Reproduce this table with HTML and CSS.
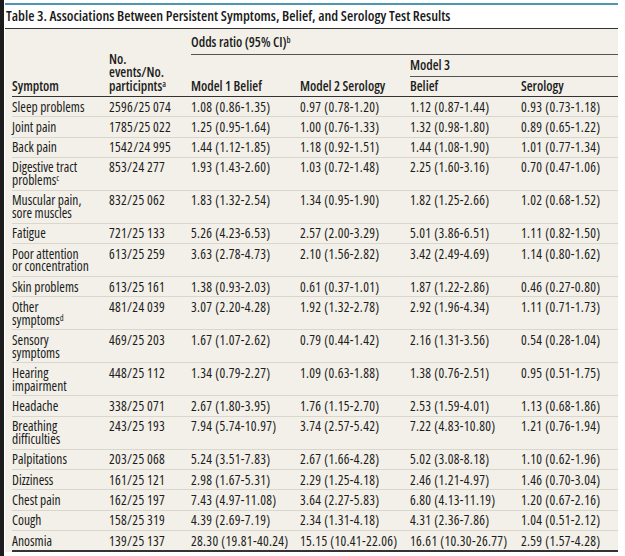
FILE: index.html
```html
<!DOCTYPE html>
<html lang="en">
<head>
<meta charset="utf-8">
<title>Table 3</title>
<link rel="stylesheet" href="styles.css">
</head>
<body>
<div class="frame">
  <div class="panel">
    <div class="title">Table 3. Associations Between Persistent Symptoms, Belief, and Serology Test Results</div>
    <div class="table-wrap">
      <table class="data">
        <colgroup>
          <col class="c1"><col class="c2"><col class="c3"><col class="c4"><col class="c5"><col class="c6">
        </colgroup>
        <thead>
          <tr class="hA">
            <th rowspan="3" class="bottom">Symptom</th>
            <th rowspan="3" class="bottom">No.<br>events/No.<br>participnts<sup>a</sup></th>
            <th colspan="4" class="span-rule">Odds ratio (95% CI)<sup>b</sup></th>
          </tr>
          <tr class="hB">
            <th></th><th></th>
            <th colspan="2" class="span-rule">Model 3</th>
          </tr>
          <tr class="hC">
            <th>Model 1 Belief</th><th>Model 2 Serology</th><th>Belief</th><th>Serology</th>
          </tr>
        </thead>
        <tbody>
          <tr><td>Sleep problems</td><td class="n">2596/25&#8201;074</td><td class="n">1.08 (0.86-1.35)</td><td class="n">0.97 (0.78-1.20)</td><td class="n">1.12 (0.87-1.44)</td><td class="n">0.93 (0.73-1.18)</td></tr>
          <tr><td>Joint pain</td><td class="n">1785/25&#8201;022</td><td class="n">1.25 (0.95-1.64)</td><td class="n">1.00 (0.76-1.33)</td><td class="n">1.32 (0.98-1.80)</td><td class="n">0.89 (0.65-1.22)</td></tr>
          <tr><td>Back pain</td><td class="n">1542/24&#8201;995</td><td class="n">1.44 (1.12-1.85)</td><td class="n">1.18 (0.92-1.51)</td><td class="n">1.44 (1.08-1.90)</td><td class="n">1.01 (0.77-1.34)</td></tr>
          <tr><td>Digestive tract<br>problems<sup>c</sup></td><td class="n">853/24&#8201;277</td><td class="n">1.93 (1.43-2.60)</td><td class="n">1.03 (0.72-1.48)</td><td class="n">2.25 (1.60-3.16)</td><td class="n">0.70 (0.47-1.06)</td></tr>
          <tr><td>Muscular pain,<br>sore muscles</td><td class="n">832/25&#8201;062</td><td class="n">1.83 (1.32-2.54)</td><td class="n">1.34 (0.95-1.90)</td><td class="n">1.82 (1.25-2.66)</td><td class="n">1.02 (0.68-1.52)</td></tr>
          <tr><td>Fatigue</td><td class="n">721/25&#8201;133</td><td class="n">5.26 (4.23-6.53)</td><td class="n">2.57 (2.00-3.29)</td><td class="n">5.01 (3.86-6.51)</td><td class="n">1.11 (0.82-1.50)</td></tr>
          <tr><td>Poor attention<br>or concentration</td><td class="n">613/25&#8201;259</td><td class="n">3.63 (2.78-4.73)</td><td class="n">2.10 (1.56-2.82)</td><td class="n">3.42 (2.49-4.69)</td><td class="n">1.14 (0.80-1.62)</td></tr>
          <tr><td>Skin problems</td><td class="n">613/25&#8201;161</td><td class="n">1.38 (0.93-2.03)</td><td class="n">0.61 (0.37-1.01)</td><td class="n">1.87 (1.22-2.86)</td><td class="n">0.46 (0.27-0.80)</td></tr>
          <tr><td>Other<br>symptoms<sup>d</sup></td><td class="n">481/24&#8201;039</td><td class="n">3.07 (2.20-4.28)</td><td class="n">1.92 (1.32-2.78)</td><td class="n">2.92 (1.96-4.34)</td><td class="n">1.11 (0.71-1.73)</td></tr>
          <tr><td>Sensory<br>symptoms</td><td class="n">469/25&#8201;203</td><td class="n">1.67 (1.07-2.62)</td><td class="n">0.79 (0.44-1.42)</td><td class="n">2.16 (1.31-3.56)</td><td class="n">0.54 (0.28-1.04)</td></tr>
          <tr><td>Hearing<br>impairment</td><td class="n">448/25&#8201;112</td><td class="n">1.34 (0.79-2.27)</td><td class="n">1.09 (0.63-1.88)</td><td class="n">1.38 (0.76-2.51)</td><td class="n">0.95 (0.51-1.75)</td></tr>
          <tr><td>Headache</td><td class="n">338/25&#8201;071</td><td class="n">2.67 (1.80-3.95)</td><td class="n">1.76 (1.15-2.70)</td><td class="n">2.53 (1.59-4.01)</td><td class="n">1.13 (0.68-1.86)</td></tr>
          <tr><td>Breathing<br>difficulties</td><td class="n">243/25&#8201;193</td><td class="n">7.94 (5.74-10.97)</td><td class="n">3.74 (2.57-5.42)</td><td class="n">7.22 (4.83-10.80)</td><td class="n">1.21 (0.76-1.94)</td></tr>
          <tr><td>Palpitations</td><td class="n">203/25&#8201;068</td><td class="n">5.24 (3.51-7.83)</td><td class="n">2.67 (1.66-4.28)</td><td class="n">5.02 (3.08-8.18)</td><td class="n">1.10 (0.62-1.96)</td></tr>
          <tr><td>Dizziness</td><td class="n">161/25&#8201;121</td><td class="n">2.98 (1.67-5.31)</td><td class="n">2.29 (1.25-4.18)</td><td class="n">2.46 (1.21-4.97)</td><td class="n">1.46 (0.70-3.04)</td></tr>
          <tr><td>Chest pain</td><td class="n">162/25&#8201;197</td><td class="n">7.43 (4.97-11.08)</td><td class="n">3.64 (2.27-5.83)</td><td class="n">6.80 (4.13-11.19)</td><td class="n">1.20 (0.67-2.16)</td></tr>
          <tr><td>Cough</td><td class="n">158/25&#8201;319</td><td class="n">4.39 (2.69-7.19)</td><td class="n">2.34 (1.31-4.18)</td><td class="n">4.31 (2.36-7.86)</td><td class="n">1.04 (0.51-2.12)</td></tr>
          <tr><td>Anosmia</td><td class="n">139/25&#8201;137</td><td class="n">28.30 (19.81-40.24)</td><td class="n">15.15 (10.41-22.06)</td><td class="n">16.61 (10.30-26.77)</td><td class="n">2.59 (1.57-4.28)</td></tr>
        </tbody>
      </table>
    </div>
  </div>
</div>
</body>
</html>
```
FILE: styles.css
```css
html, body {
  margin: 0;
  padding: 0;
  background: #ffffff;
}
body {
  font-family: "Open Sans", Roboto, sans-serif;
  font-stretch: 87%;
  color: #1c1c1c;
}
.frame {
  width: 625px;
  height: 556px;
  display: flex;
  border-left: 4px solid #1c1c1c;
  box-sizing: border-box;
  padding: 3px 7px 0 1px;
}
.panel {
  flex: 1;
  display: flex;
  flex-direction: column;
}
.title {
  border-top: 2px solid #4b98b0;
  border-bottom: 1.5px solid #333333;
  height: 22.5px;
  padding-left: 1px;
  font-size: 14.4px;
  font-weight: 600;
  line-height: 22px;
  color: #1a1a1a;
  white-space: nowrap;
}
.table-wrap {
  background: #f2f0e8;
  padding-left: 7px;
}
.data {
  width: 606px;
  border-collapse: collapse;
  table-layout: fixed;
  font-size: 13.5px;
}
.c1 { width: 97px; }
.c2 { width: 82px; }
.c3 { width: 109px; }
.c4 { width: 110px; }
.c5 { width: 111px; }
.c6 { width: 97px; }

th {
  text-align: left;
  font-weight: 600;
  padding: 0;
  line-height: 13.5px;
  vertical-align: middle;
  white-space: nowrap;
}
th.bottom {
  vertical-align: bottom;
  padding-bottom: 3px;
}
.hA { height: 26px; }
.hB { height: 22px; }
.hC { height: 20px; }
.hA th.span-rule {
  padding-top: 3px;
}
.hA th.span-rule, .hB th.span-rule {
  border-bottom: 1px solid #555555;
}
.hC th, th.bottom {
  border-bottom: 1.5px solid #333333;
}
sup {
  font-size: 8.5px;
  line-height: 0;
  vertical-align: 4px;
}
td {
  padding: 3.6px 0 3px;
  line-height: 12.7px;
  font-weight: 500;
  vertical-align: top;
  border-bottom: 1px solid #d9d6cc;
  white-space: nowrap;
}
td.n {
  letter-spacing: 0.3px;
}
tbody tr:last-child td {
  border-bottom: 2px solid #333333;
}
```
